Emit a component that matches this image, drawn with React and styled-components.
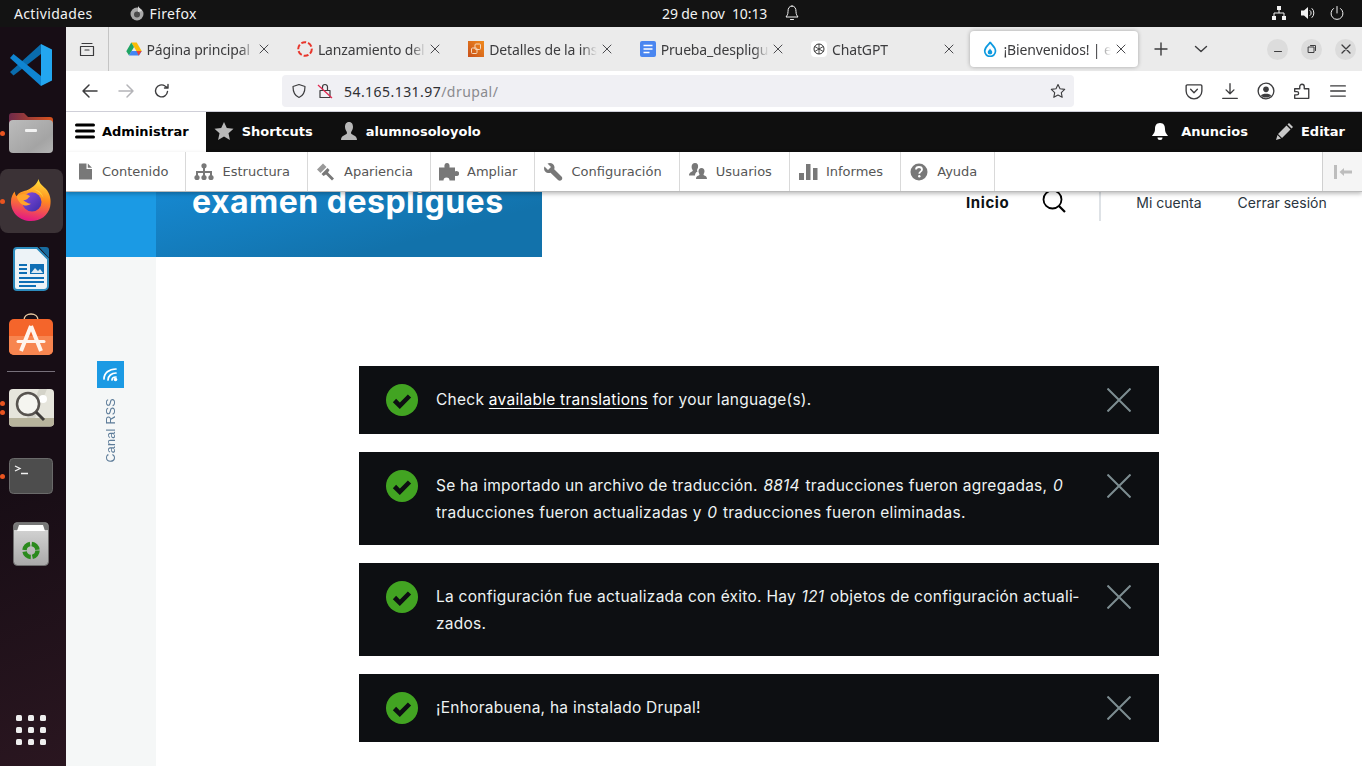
import styled, { createGlobalStyle } from "styled-components";

const GlobalStyle = createGlobalStyle`
  html, body {
    margin: 0;
    padding: 0;
    background: #fff;
  }
  * {
    box-sizing: border-box;
  }
`;

const Desktop = styled.div`
  width: 1362px;
  height: 766px;
  display: flex;
  flex-direction: column;
  overflow: hidden;
`;

const TopBar = styled.header`
  height: 27px;
  flex: none;
  display: grid;
  grid-template-columns: 662px 1fr auto;
  align-items: center;
  background: #131313;
  color: #f2f2f2;
  font: 14px "Noto Sans", sans-serif;
  padding-bottom: 1px;
`;

const TopLeft = styled.div`
  display: flex;
  align-items: center;
  padding-left: 14px;
  letter-spacing: 0.35px;
`;

const AppName = styled.span`
  display: flex;
  align-items: center;
  gap: 5px;
  margin-left: 36px;
`;

const Clock = styled.div`
  display: flex;
  align-items: center;
  gap: 17px;
  letter-spacing: -0.1px;
`;

const SystemTray = styled.div`
  display: flex;
  align-items: center;
  gap: 13px;
  padding-right: 17px;
`;

const Body = styled.div`
  flex: 1;
  min-height: 0;
  display: flex;
`;

const Dock = styled.nav`
  width: 66px;
  flex: none;
  display: flex;
  flex-direction: column;
  background: linear-gradient(160deg, #170d15 60%, #2a1620 100%);
  padding: 3px 0 0;
`;

const DockSlot = styled.div`
  position: relative;
  height: 68px;
  flex: none;
  display: flex;
  align-items: center;
  justify-content: center;
  padding: ${(p) => p.$nudge ?? 0}px 4px 0 0;
  ${(p) => p.$lift && `padding-bottom: ${p.$lift}px;`}
  ${(p) => p.$active && "&::before { content: ''; position: absolute; left: 0; top: 3px; bottom: 1px; width: 63px; background: #3b3236; border-radius: 8px; }"}
  svg {
    position: relative;
  }
`;

const DockDot = styled.i`
  position: absolute;
  left: 0;
  top: ${(p) => p.$top}px;
  width: 5px;
  height: 5px;
  border-radius: 50%;
  background: #e95420;
`;

const DockSeparator = styled.hr`
  width: 48px;
  height: 1px;
  border: 0;
  margin: 1px 0 1px 7px;
  background: #77707a;
`;

const DockGrid = styled.div`
  margin: auto 0 21px 16px;
  display: grid;
  grid-template-columns: repeat(3, 6px);
  gap: 6px;
  i {
    width: 6px;
    height: 6px;
    border-radius: 1.5px;
    background: #eeeeee;
  }
`;

const Browser = styled.main`
  flex: 1;
  min-width: 0;
  display: flex;
  flex-direction: column;
  background: #fff;
`;

const TabBar = styled.div`
  height: 44px;
  flex: none;
  display: flex;
  align-items: center;
  background: #ebebeb;
  font: 14px "Noto Sans", sans-serif;
  color: #3c3c3e;
`;

const ViewButton = styled.div`
  width: 43px;
  height: 44px;
  flex: none;
  display: flex;
  align-items: center;
  justify-content: center;
  border-right: 1px solid #c4c4c4;
  margin-right: 2.5px;
`;

const Tab = styled.div`
  width: 167.4px;
  height: 36px;
  margin: 0 2px;
  flex: none;
  display: flex;
  align-items: center;
  padding-left: 12px;
  gap: 5px;
  position: relative;
  border-radius: 4px;
  ${(p) => p.$active && "background: #fff; box-shadow: 0 0 4px rgba(0,0,0,.3);"}
`;

const TabLabel = styled.span`
  width: 108px;
  white-space: nowrap;
  overflow: hidden;
  letter-spacing: -0.15px;
  -webkit-mask-image: linear-gradient(to right, #000 86%, transparent 100%);
  mask-image: linear-gradient(to right, #000 86%, transparent 100%);
`;

const TabClose = styled.span`
  position: absolute;
  right: 11px;
  top: 12px;
  display: flex;
`;

const TabTools = styled.div`
  display: flex;
  align-items: center;
  margin-left: 14px;
  gap: 26px;
`;

const WindowButtons = styled.div`
  margin-left: auto;
  display: flex;
  gap: 13px;
  padding-right: 6px;
`;

const WindowButton = styled.div`
  width: 21px;
  height: 21px;
  border-radius: 50%;
  background: #dcdcdc;
  display: flex;
  align-items: center;
  justify-content: center;
`;

const NavBar = styled.div`
  height: 41px;
  flex: none;
  display: flex;
  align-items: center;
  border-bottom: 1px solid #cfcfd8;
  background: #fff;
`;

const NavButtons = styled.div`
  width: 216px;
  flex: none;
  display: flex;
  align-items: center;
  gap: 18px;
  padding-left: 15px;
`;

const UrlBar = styled.div`
  width: 792px;
  height: 32px;
  flex: none;
  display: flex;
  align-items: center;
  padding: 0 8px 0 9px;
  background: #f0f0f4;
  border-radius: 4px;
  font: 14px "Noto Sans", sans-serif;
  letter-spacing: 0.45px;
  color: #2f2f33;
`;

const UrlIcons = styled.span`
  display: flex;
  align-items: center;
  gap: 10px;
  margin-right: 11px;
`;

const UrlPath = styled.span`
  color: #8a8a8e;
`;

const UrlStar = styled.span`
  display: flex;
  margin-left: auto;
`;

const BrowserTools = styled.div`
  flex: 1;
  display: flex;
  justify-content: flex-end;
  align-items: center;
  gap: 18px;
  padding-right: 15px;
`;

const AdminBar = styled.div`
  height: 40px;
  flex: none;
  display: flex;
  align-items: center;
  background: #0f0f0f;
  color: #fff;
  font: bold 13px "DejaVu Sans", sans-serif;
`;

const AdminItem = styled.div`
  height: 100%;
  display: flex;
  align-items: center;
  gap: ${(p) => p.$gap || 8}px;
  padding: 0 ${(p) => p.$right ?? 18}px 2px ${(p) => p.$left ?? 8}px;
  ${(p) => p.$active && "background: #fff; color: #000;"}
  ${(p) => p.$push && "margin-left: auto;"}
`;

const Tray = styled.div`
  height: 40px;
  flex: none;
  position: relative;
  z-index: 2;
  display: flex;
  background: #fff;
  border-bottom: 1px solid #bbb;
  box-shadow: 0 2px 4px rgba(0, 0, 0, 0.25);
  font: 13px "DejaVu Sans", sans-serif;
  color: #565656;
`;

const TrayItem = styled.div`
  display: flex;
  align-items: center;
  gap: 8px;
  padding: 0 17.05px 0 8px;
  border-right: 1px solid #d9d9d9;
`;

const TrayToggle = styled.div`
  width: 40px;
  margin-left: auto;
  display: flex;
  align-items: center;
  justify-content: center;
  background: #f5f5f5;
  border-left: 1px solid #d0d0d0;
`;

const Page = styled.div`
  flex: 1;
  min-height: 0;
  display: grid;
  grid-template-columns: 90px 1fr;
  grid-template-rows: 65px 1fr;
  font-family: Inter, sans-serif;
`;

const Corner = styled.div`
  background: #1b9ae4;
`;

const Header = styled.div`
  display: flex;
  align-items: flex-start;
`;

const Brand = styled.div`
  width: 386px;
  height: 65px;
  padding: 0 0 0 36px;
  background: linear-gradient(165deg, #1688d0 0%, #1272ab 70%);
  color: #fff;
  font: 700 32px/20px Inter, sans-serif;
  letter-spacing: 0.5px;
  white-space: nowrap;
`;

const MainNav = styled.div`
  flex: 1;
  display: flex;
  align-items: flex-start;
  height: 29px;
  font-size: 14px;
`;

const NavLink = styled.span`
  color: ${(p) => (p.$strong ? "#0d1214" : "#2a3540")};
  font-weight: ${(p) => (p.$strong ? 700 : 400)};
  font-size: ${(p) => (p.$strong ? 15 : 14)}px;
  letter-spacing: ${(p) => (p.$strong ? 0.6 : 0)}px;
  line-height: 22px;
  margin-left: ${(p) => p.$left}px;
`;

const SearchButton = styled.span`
  display: flex;
  margin: -2px 0 0 33px;
`;

const NavDivider = styled.span`
  width: 2px;
  height: 29px;
  margin-left: 33px;
  background: #dee2e6;
`;

const Sidebar = styled.aside`
  display: flex;
  flex-direction: column;
  align-items: center;
  padding: 104px 1px 0 0;
  background: #f5f7f7;
`;

const RssBadge = styled.div`
  width: 27px;
  height: 27px;
  display: flex;
  align-items: center;
  justify-content: center;
  background: #1b9ae4;
`;

const RssLabel = styled.span`
  margin-top: 10px;
  writing-mode: vertical-rl;
  transform: rotate(180deg);
  font: 12.5px "Liberation Sans", sans-serif;
  letter-spacing: 0.3px;
  color: #5d7c99;
`;

const Messages = styled.section`
  display: flex;
  flex-direction: column;
  align-items: center;
  gap: 18px;
  padding-top: 109px;
`;

const Message = styled.div`
  width: 800px;
  display: flex;
  align-items: flex-start;
  padding: 18px 28px 18px 27px;
  background: #0d0f12;
  color: #eef3f3;
`;

const MessageText = styled.p`
  flex: 1;
  margin: 1.5px 24px 1.5px 18px;
  font: 15.5px/27px Inter, sans-serif;
  letter-spacing: 0.26px;
  em {
    margin: 0 1px;
  }
  a {
    color: #fff;
    text-decoration: underline;
    text-underline-offset: 3px;
  }
`;

const MessageClose = styled.span`
  display: flex;
  margin-top: 4px;
`;

const Icon = ({ size = 16, w, h, vb = "0 0 16 16", children }) => (
  <svg width={w || size} height={h || size} viewBox={vb} fill="none">
    {children}
  </svg>
);

const Stroke = ({ d, c = "#3c3c3e", sw = 1.4 }) => (
  <path d={d} stroke={c} strokeWidth={sw} strokeLinecap="round" strokeLinejoin="round" fill="none" />
);

const CloseGlyph = () => (
  <Icon size={12} vb="0 0 12 12">
    <Stroke d="M2 2l8 8M10 2l-8 8" c="#4a4a4e" sw={1} />
  </Icon>
);

const DriveIcon = () => (
  <Icon>
    <path d="M5.3 1.5h5.4l5 8.6h-5.3z" fill="#fbbc04" />
    <path d="M5.3 1.5L.3 10.2 3 14.6l5-8.7z" fill="#1fa463" />
    <path d="M3 14.6h10.1l2.6-4.5H5.4z" fill="#4285f4" />
    <path d="M12.6 14.6l3.1-4.5h-5.3z" fill="#ea4335" />
  </Icon>
);

const RedRingIcon = () => (
  <Icon>
    <circle cx="8" cy="8" r="6.8" stroke="#e8352b" strokeWidth="2" strokeDasharray="5 2" />
  </Icon>
);

const AwsIcon = () => (
  <Icon>
    <defs>
      <linearGradient id="awsg" x1="0" y1="1" x2="1" y2="0">
        <stop offset="0" stopColor="#c8511b" />
        <stop offset="1" stopColor="#f08a1d" />
      </linearGradient>
    </defs>
    <rect width="16" height="16" fill="url(#awsg)" />
    <rect x="7" y="3" width="5.5" height="5.5" rx="1" stroke="#f6d9bd" strokeWidth="1" />
    <rect x="3.500" y="7" width="5.5" height="5.5" rx="1" stroke="#f6d9bd" strokeWidth="1" />
  </Icon>
);

const DocsIcon = () => (
  <Icon>
    <rect width="16" height="16" rx="2" fill="#4a86f0" />
    <path d="M3.5 4.5h9M3.5 8h9M3.5 11.5h6" stroke="#fff" strokeWidth="1.6" />
  </Icon>
);

const ChatIcon = () => (
  <Icon>
    <rect width="16" height="16" rx="4" fill="#fff" />
    <circle cx="8" cy="8" r="5" stroke="#333" strokeWidth="1" />
    <path d="M8 3v10M3.7 5.5l8.6 5M12.3 5.5l-8.6 5" stroke="#333" strokeWidth=".9" />
  </Icon>
);

const DropIcon = () => (
  <Icon>
    <path d="M8.2 1c.6 2.4 5.3 4.6 5.3 9A5.4 5.4 0 0 1 2.7 10C2.7 5.6 7.6 3.400 8.200 1z" stroke="#0d9ae0" strokeWidth="1.7" />
    <path d="M8 7.500c.5 1.300 2.300 2.200 2.300 3.800a2.300 2.300 0 0 1-4.600 0C5.700 9.700 7.500 8.800 8 7.500z" fill="#0d9ae0" />
  </Icon>
);

const tabs = [
  { icon: <DriveIcon />, label: "Página principal" },
  { icon: <RedRingIcon />, label: "Lanzamiento del" },
  { icon: <AwsIcon />, label: "Detalles de la ins" },
  { icon: <DocsIcon />, label: "Prueba_despligu" },
  { icon: <ChatIcon />, label: "ChatGPT" },
  { icon: <DropIcon />, label: "¡Bienvenidos! | e", active: true },
];

const trayIcons = {
  content: (
    <>
      <path d="M5 1.500h7.500v5.500H18v10.500H5z" fill="#787878" />
      <path d="M13.800 1.500L18 5.700h-4.200z" fill="#787878" />
    </>
  ),
  structure: (
    <>
      <circle cx="10" cy="3.800" r="2.600" fill="#787878" />
      <circle cx="3" cy="15.500" r="2.600" fill="#787878" />
      <circle cx="10" cy="15.500" r="2.600" fill="#787878" />
      <circle cx="17" cy="15.500" r="2.600" fill="#787878" />
      <path d="M10 5v10M3 15v-5h14v5" stroke="#787878" strokeWidth="2" />
    </>
  ),
  appearance: (
    <>
      <path d="M1 7.500L7 1.500l3.500 3.500-6 6z" fill="#9a9a9a" />
      <path d="M5.500 12l6-6 2 2-1.500 2.500 6 6-2 2-6-6L7.500 14z" fill="#787878" />
    </>
  ),
  extend: (
    <>
      <path d="M0 5.500h5.500C5 3 6 1 8 1s3 2 2.500 4.500H16v13H0z" fill="#787878" />
      <circle cx="17.500" cy="11.500" r="2.600" fill="#787878" />
      <circle cx="7.500" cy="18.500" r="3" fill="#fff" />
    </>
  ),
  config: (
    <path d="M1.500 4.500L5 8l3-3-3.500-3.500C7.500 0 11 1.500 11.500 5c.1 1-.1 1.800-.3 2.300l7.300 7.200c1 1 1 2.500 0 3.500s-2.500 1-3.500 0l-7.500-7.200c-.5.2-1.500.4-2.500.2C2 10.500.2 7.500 1.500 4.500z" fill="#787878" />
  ),
  users: (
    <path d="M7 1c2.500 0 3.500 2 3 4.500-.2 1.200-1 2-1 3l.5 1C7.500 10.500 7 12 7 13.500H1c0-3 2.500-3.500 3.800-4.500.3-1-1.200-1.500-1.200-4C3.600 2.500 5 1 7 1zM13.500 6c2 0 3 1.500 3 3.500 0 1.200-1 2.200-1 3.300.8 1.200 3.500 1 3.500 4.200H8c0-3.200 2.700-3 3.500-4.200 0-1.100-1-2.100-1-3.300 0-2 1-3.500 3-3.500z" fill="#787878" />
  ),
  reports: <path d="M1 11h5v7H1zM8 2h4.500v16H8zM15 6h4.500v12H15z" fill="#787878" />,
  help: (
    <>
      <circle cx="10" cy="10" r="8.500" fill="#787878" />
      <path d="M7 7.500C7 5.800 8.400 5 10 5c1.800 0 3 1 3 2.500 0 2.300-2.700 2-2.700 4.300" stroke="#fff" strokeWidth="1.800" />
      <circle cx="10.300" cy="14.300" r="1.200" fill="#fff" />
    </>
  ),
};

const trayItems = [
  { icon: "content", label: "Contenido" },
  { icon: "structure", label: "Estructura" },
  { icon: "appearance", label: "Apariencia" },
  { icon: "extend", label: "Ampliar" },
  { icon: "config", label: "Configuración" },
  { icon: "users", label: "Usuarios" },
  { icon: "reports", label: "Informes" },
  { icon: "help", label: "Ayuda" },
];

const CheckBadge = () => (
  <Icon size={32} vb="0 0 32 32">
    <circle cx="16" cy="16" r="16" fill="#42a422" />
    <path d="M8.500 16.500l5.300 5.300L23.500 12" stroke="#0d0f12" strokeWidth="4.600" />
  </Icon>
);

const CloseCross = () => (
  <Icon size={24} vb="0 0 24 24">
    <path d="M.5.500l23 23M23.500.500l-23 23" stroke="#7d8d91" strokeWidth="2" />
  </Icon>
);

const VsCodeIcon = () => (
  <Icon w={42} h={42} vb="0 0 42 42">
    <path d="M31 0L0 28l3.500 3.500L31 10z" fill="#0a6cad" />
    <path d="M3.500 10L0 14l31 28V32z" fill="#0f85d2" />
    <path d="M31 0l11 5.500v31L31 42z" fill="#23a6f0" />
  </Icon>
);

const FilesIcon = () => (
  <Icon w={44} h={40} vb="0 0 44 40">
    <defs>
      <linearGradient id="filestrip" x1="0" y1="0" x2="1" y2="0">
        <stop offset="0" stopColor="#6f2a4a" />
        <stop offset="1" stopColor="#d9541e" />
      </linearGradient>
      <linearGradient id="filebody" x1="0" y1="0" x2="1" y2="1">
        <stop offset="0" stopColor="#bcbcbc" />
        <stop offset=".7" stopColor="#a4a4a4" />
        <stop offset="1" stopColor="#b4b4b4" />
      </linearGradient>
    </defs>
    <path d="M0 3a3 3 0 0 1 3-3h12l4 4h22a3 3 0 0 1 3 3v8H0z" fill="url(#filestrip)" />
    <rect y="7" width="44" height="33" rx="4" fill="url(#filebody)" />
    <rect x="16" y="16" width="12" height="3" rx="1" fill="#f2f2f2" />
  </Icon>
);

const FirefoxIcon = () => (
  <Icon w={42} h={44} vb="0 0 44 46">
    <defs>
      <linearGradient id="ffa" x1=".6" y1="0" x2=".4" y2="1">
        <stop offset="0" stopColor="#ffe03a" />
        <stop offset=".45" stopColor="#ff8a1f" />
        <stop offset="1" stopColor="#e31587" />
      </linearGradient>
      <linearGradient id="ffb" x1="0" y1="0" x2="1" y2="1">
        <stop offset="0" stopColor="#8a4fe0" />
        <stop offset="1" stopColor="#3a2ba8" />
      </linearGradient>
    </defs>
    <path d="M30 1c1 6 5 7 9 12 4 6 4 12 3 17-2 9-10 15-20 15C10 45 1 36 1 25c0-5 2-9 4-11 0 2 1 4 2 5 2-4 6-5 10-6 5-2 11-6 13-12z" fill="url(#ffa)" />
    <circle cx="23" cy="25" r="10" fill="url(#ffb)" />
    <path d="M7 19c4-3 10-3 14 0-3 2-2 4-7 4 2 2 5 4 8 4-5 4-13 1-15-8z" fill="#ffa42b" />
    <path d="M25 12c5 0 9 4 10 9-1-3-5-7-10-9z" fill="#ffd23a" />
  </Icon>
);

const WriterIcon = () => (
  <Icon w={36} h={44} vb="0 0 36 44">
    <path d="M4 1h20l11 11v27a4 4 0 0 1-4 4H4a3 3 0 0 1-3-3V4a3 3 0 0 1 3-3z" fill="#edf3f7" stroke="#2c8bbd" strokeWidth="2" />
    <path d="M26 0h7a3 3 0 0 1 3 3v8z" fill="#186b9f" />
    <rect x="17" y="17" width="14" height="10" fill="#0f6fb5" />
    <path d="M18 26l4-5 3 3 2-2 3 4z" fill="#dfeaf2" />
    <path d="M6 18h8M6 22h8M6 26h8M6 31h25M6 35h25M6 39h17" stroke="#0f6fb5" strokeWidth="2" />
  </Icon>
);

const SoftwareIcon = () => (
  <Icon w={44} h={42} vb="0 0 44 42">
    <path d="M15 7c0-8 14-8 14 0" stroke="#e8c9a0" strokeWidth="1.500" />
    <rect y="6" width="44" height="36" rx="5" fill="#f4652b" />
    <path d="M0 23h44v14a5 5 0 0 1-5 5H5a5 5 0 0 1-5-5z" fill="#f78550" />
    <path d="M22 13L12 38M22 13l10 25" stroke="#fff3ec" strokeWidth="4" />
    <path d="M9 28.500h26" stroke="#fff3ec" strokeWidth="3" strokeLinecap="round" />
  </Icon>
);

const MagnifierIcon = () => (
  <Icon w={45} h={38} vb="0 0 45 38">
    <rect width="45" height="37.500" rx="4" fill="#e6e5dc" />
    <path d="M30 0h8L26 29h-8z" fill="#d4d3c9" />
    <path d="M0 29h45v4.500a4 4 0 0 1-4 4H4a4 4 0 0 1-4-4z" fill="#b7b39c" />
    <circle cx="34" cy="10" r="4" fill="#fff" />
    <circle cx="19" cy="15" r="11" fill="#f5f5f0" stroke="#57534f" strokeWidth="2.500" />
    <path d="M27 23l8 8" stroke="#3f3c3a" strokeWidth="3" />
  </Icon>
);

const TerminalIcon = () => (
  <Icon w={44} h={36} vb="0 0 44 36">
    <rect x=".5" y=".5" width="43" height="35" rx="4" fill="#4d4d4d" stroke="#6a6a6a" />
    <path d="M6 8l5 2.500L6 13M12 15.500h7" stroke="#f2f2f2" strokeWidth="1.300" />
  </Icon>
);

const TrashIcon = () => (
  <Icon w={36} h={44} vb="0 0 36 44">
    <defs>
      <linearGradient id="trashbody" x1="0" y1="0" x2="0" y2="1">
        <stop offset="0" stopColor="#dadada" />
        <stop offset="1" stopColor="#a9a9a9" />
      </linearGradient>
    </defs>
    <rect x=".5" y=".5" width="35" height="43" rx="4" fill="url(#trashbody)" stroke="#6f6f6f" />
    <path d="M1 4a3 3 0 0 1 3-3h28a3 3 0 0 1 3 3v4H1z" fill="#777" />
    <path d="M4 9l2-6h24l2 6z" fill="#fff" />
    <circle cx="18" cy="28.500" r="6.500" stroke="#2b8a1d" strokeWidth="4.500" strokeDasharray="8.500 1.700" />
  </Icon>
);

const App = () => (
  <Desktop>
    <GlobalStyle />
    <TopBar>
      <TopLeft>
        Actividades
        <AppName>
          <Icon>
            <circle cx="8" cy="9" r="6.500" fill="#a8a8a8" />
            <circle cx="8" cy="9.500" r="3" fill="#4b4b4b" />
            <path d="M9 1c1 2 3 3 4 5l-4 1z" fill="#d8d8d8" />
          </Icon>
          Firefox
        </AppName>
      </TopLeft>
      <Clock>
        <span>29 de nov&nbsp; 10:13</span>
        <Icon>
          <Stroke d="M8 1c3 0 4 2.500 4 5.500 0 3 1 4 2 5.500H2c1-1.500 2-2.500 2-5.500C4 3.500 5 1 8 1zM6.500 14.500h3" c="#f2f2f2" sw={1} />
        </Icon>
      </Clock>
      <SystemTray>
        <Icon>
          <path d="M6 1h4v4H6zM1 11h4v4H1zM11 11h4v4h-4z" fill="#f2f2f2" />
          <path d="M8 5v3M3 11V8h10v3" stroke="#f2f2f2" />
        </Icon>
        <Icon>
          <path d="M1 5.500h3L8 2v12l-4-3.500H1z" fill="#f2f2f2" />
          <Stroke d="M10 5.500a3 3 0 0 1 0 5M12 3.500a6 6 0 0 1 0 9" c="#f2f2f2" sw={1} />
        </Icon>
        <Icon>
          <Stroke d="M8 1.500V8M4.500 3.500a6 6 0 1 0 7 0" c="#f2f2f2" sw={1} />
        </Icon>
      </SystemTray>
    </TopBar>
    <Body>
      <Dock>
        <DockSlot $nudge={2}>
          <VsCodeIcon />
        </DockSlot>
        <DockSlot $nudge={2}>
          <DockDot $top={33} />
          <FilesIcon />
        </DockSlot>
        <DockSlot $active>
          <DockDot $top={33} />
          <FirefoxIcon />
        </DockSlot>
        <DockSlot $nudge={1}>
          <WriterIcon />
        </DockSlot>
        <DockSlot $lift={4}>
          <SoftwareIcon />
        </DockSlot>
        <DockSeparator />
        <DockSlot $nudge={2}>
          <DockDot $top={28} />
          <DockDot $top={37} />
          <MagnifierIcon />
        </DockSlot>
        <DockSlot $nudge={2}>
          <DockDot $top={33} />
          <TerminalIcon />
        </DockSlot>
        <DockSlot $nudge={2}>
          <TrashIcon />
        </DockSlot>
        <DockGrid>
          {Array.from({ length: 9 }, (_, i) => (
            <i key={i} />
          ))}
        </DockGrid>
      </Dock>
      <Browser>
        <TabBar>
          <ViewButton>
            <Icon>
              <Stroke d="M3 2.500h10M1.500 5.500h13v9h-13zM6 9h4" sw={1.200} />
            </Icon>
          </ViewButton>
          {tabs.map((tab) => (
            <Tab key={tab.label} $active={tab.active}>
              {tab.icon}
              <TabLabel>{tab.label}</TabLabel>
              <TabClose>
                <CloseGlyph />
              </TabClose>
            </Tab>
          ))}
          <TabTools>
            <Icon size={14} vb="0 0 14 14">
              <Stroke d="M7 1v12M1 7h12" />
            </Icon>
            <Icon size={14} vb="0 0 14 14">
              <Stroke d="M1.500 4.500L7 9.500l5.500-5" />
            </Icon>
          </TabTools>
          <WindowButtons>
            <WindowButton>
              <Icon size={10} vb="0 0 10 10">
                <Stroke d="M1.500 7.500h7" sw={1} />
              </Icon>
            </WindowButton>
            <WindowButton>
              <Icon size={10} vb="0 0 10 10">
                <Stroke d="M1.500 3h5.500v5.500H1.500zM3.500 1.500h5v5" sw={1} />
              </Icon>
            </WindowButton>
            <WindowButton>
              <Icon size={10} vb="0 0 10 10">
                <Stroke d="M1 1l8 8M9 1l-8 8" sw={1.300} />
              </Icon>
            </WindowButton>
          </WindowButtons>
        </TabBar>
        <NavBar>
          <NavButtons>
            <Icon w={18} h={16} vb="0 0 18 16">
              <Stroke d="M16 8H2M8 2L2 8l6 6" sw={1.500} />
            </Icon>
            <Icon w={18} h={16} vb="0 0 18 16">
              <Stroke d="M2 8h14M10 2l6 6-6 6" c="#b4b4b8" sw={1.500} />
            </Icon>
            <Icon w={18} h={16} vb="-1 0 18 16">
              <Stroke d="M13.500 8.500A6 6 0 1 1 11 3l3 2M14 1.500V5h-3.500" sw={1.400} />
            </Icon>
          </NavButtons>
          <UrlBar>
            <UrlIcons>
              <Icon>
                <Stroke d="M8 1.500l6 2c0 5-1 9-6 11-5-2-6-6-6-11z" sw={1.200} />
              </Icon>
              <Icon>
                <Stroke d="M3 7.500h10v7H3zM5.500 7.500V4a2.500 2.500 0 0 1 5 0v3.500" sw={1.200} />
                <path d="M1 2l14 13" stroke="#e22850" strokeWidth="1.200" />
              </Icon>
            </UrlIcons>
            54.165.131.97
            <UrlPath>/drupal/</UrlPath>
            <UrlStar>
              <Icon>
                <Stroke d="M8 1.500l2 4.300 4.700.6-3.400 3.200.9 4.700L8 12l-4.200 2.300.9-4.700L1.300 6.400 6 5.800z" sw={1.100} />
              </Icon>
            </UrlStar>
          </UrlBar>
          <BrowserTools>
            <Icon size={18} vb="0 0 16 16">
              <Stroke d="M2 2.500h12a1 1 0 0 1 1 1V8a7 7 0 0 1-14 0V3.500a1 1 0 0 1 1-1zM5 6.500l3 3 3-3" sw={1.200} />
            </Icon>
            <Icon size={18} vb="0 0 16 16">
              <Stroke d="M8 1.500v9M4.500 7L8 10.500 11.500 7M1.500 14.500h13" sw={1.200} />
            </Icon>
            <Icon size={18} vb="0 0 16 16">
              <circle cx="8" cy="8" r="7" stroke="#3c3c3e" strokeWidth="1.200" />
              <circle cx="8" cy="6.500" r="2.500" fill="#3c3c3e" />
              <path d="M3.500 12c1-2 8-2 9 0-2 2.500-7 2.500-9 0z" fill="#3c3c3e" />
            </Icon>
            <Icon size={18} vb="0 0 16 16">
              <Stroke d="M1.500 6H6V4a2 2 0 0 1 4 0v2h4v8.500H1.500v-3h2a1.500 1.500 0 0 0 0-3h-2z" sw={1.200} />
            </Icon>
            <Icon size={18} vb="0 0 16 16">
              <Stroke d="M1.500 3.500h13M1.500 8h13M1.500 12.500h13" sw={1.200} />
            </Icon>
          </BrowserTools>
        </NavBar>
        <AdminBar>
          <AdminItem $active $left={9} $right={17} $gap={7}>
            <Icon size={20} vb="0 0 20 20">
              <path d="M1.500 4h17M1.500 10h17M1.500 16h17" stroke="#000" strokeWidth="3" strokeLinecap="round" />
            </Icon>
            Administrar
          </AdminItem>
          <AdminItem>
            <Icon size={20} vb="0 0 20 20">
              <path d="M10 1l2.800 6 6.700.8-5 4.500 1.400 6.700L10 15.600 4.100 19l1.400-6.700-5-4.500L7.200 7z" fill="#b8b8b8" />
            </Icon>
            Shortcuts
          </AdminItem>
          <AdminItem $gap={7}>
            <Icon size={20} vb="0 0 20 20">
              <path d="M10 1c3 0 4 2.500 4 5 0 3-2 4-2 6 0 2 6 2 6 7H2c0-5 6-5 6-7 0-2-2-3-2-6 0-2.500 1-5 4-5z" fill="#b8b8b8" />
            </Icon>
            alumnosoloyolo
          </AdminItem>
          <AdminItem $push $gap={11} $right={19}>
            <Icon size={20} vb="0 0 20 20">
              <path d="M10 2c4 0 5 3 5 6 0 4 2 5 3 7H2c1-2 3-3 3-7 0-3 1-6 5-6zM7.500 16.500h5a2.500 2.500 0 0 1-5 0z" fill="#fff" />
            </Icon>
            Anuncios
          </AdminItem>
          <AdminItem $gap={6} $right={17}>
            <Icon size={20} vb="0 0 20 20">
              <path d="M14 2l4 4-1.500 1.500-4-4zM11.500 4.500l4 4L7 17l-4-4zM2.500 14l3.500 3.500-5 1.500z" fill="#c8c8c8" />
            </Icon>
            Editar
          </AdminItem>
        </AdminBar>
        <Tray>
          {trayItems.map((item) => (
            <TrayItem key={item.label}>
              <Icon size={20} vb="0 0 20 20">
                {trayIcons[item.icon]}
              </Icon>
              {item.label}
            </TrayItem>
          ))}
          <TrayToggle>
            <Icon w={20} h={16} vb="0 0 20 16">
              <path d="M1 1h3v14H1zM11 4v2.500h8v3h-8V12L6.500 8z" fill="#bdbdbd" />
            </Icon>
          </TrayToggle>
        </Tray>
        <Page>
          <Corner />
          <Header>
            <Brand>examen despligues</Brand>
            <MainNav>
              <NavLink $strong $left={424}>
                Inicio
              </NavLink>
              <SearchButton>
                <Icon size={24} vb="0 0 24 24">
                  <circle cx="10.500" cy="9.500" r="9" stroke="#000" strokeWidth="1.800" />
                  <path d="M17 16l6 6" stroke="#000" strokeWidth="2.200" />
                </Icon>
              </SearchButton>
              <NavDivider />
              <NavLink $left={35}>Mi cuenta</NavLink>
              <NavLink $left={36}>Cerrar sesión</NavLink>
            </MainNav>
          </Header>
          <Sidebar>
            <RssBadge>
              <Icon size={17} vb="0 0 17 17">
                <circle cx="13.500" cy="13.500" r="1.800" fill="#fff" />
                <path d="M2 13C2 7 7 3 14 3M6 14c0-4 3.500-7 8-7M10 14c0-1.500 1.500-3 4-3" stroke="#fff" strokeWidth="1.700" strokeLinecap="round" />
              </Icon>
            </RssBadge>
            <RssLabel>Canal RSS</RssLabel>
          </Sidebar>
          <Messages>
            <Message>
              <CheckBadge />
              <MessageText>
                Check <a>available translations</a> for your language(s).
              </MessageText>
              <MessageClose>
                <CloseCross />
              </MessageClose>
            </Message>
            <Message>
              <CheckBadge />
              <MessageText>
                Se ha importado un archivo de traducción. <em>8814</em> traducciones fueron agregadas, <em>0</em> traducciones fueron actualizadas y <em>0</em> traducciones fueron eliminadas.
              </MessageText>
              <MessageClose>
                <CloseCross />
              </MessageClose>
            </Message>
            <Message>
              <CheckBadge />
              <MessageText>
                La configuración fue actualizada con éxito. Hay <em>121</em> objetos de configuración actuali{"\u00AD"}zados.
              </MessageText>
              <MessageClose>
                <CloseCross />
              </MessageClose>
            </Message>
            <Message>
              <CheckBadge />
              <MessageText>¡Enhorabuena, ha instalado Drupal!</MessageText>
              <MessageClose>
                <CloseCross />
              </MessageClose>
            </Message>
          </Messages>
        </Page>
      </Browser>
    </Body>
  </Desktop>
);

export default App;
